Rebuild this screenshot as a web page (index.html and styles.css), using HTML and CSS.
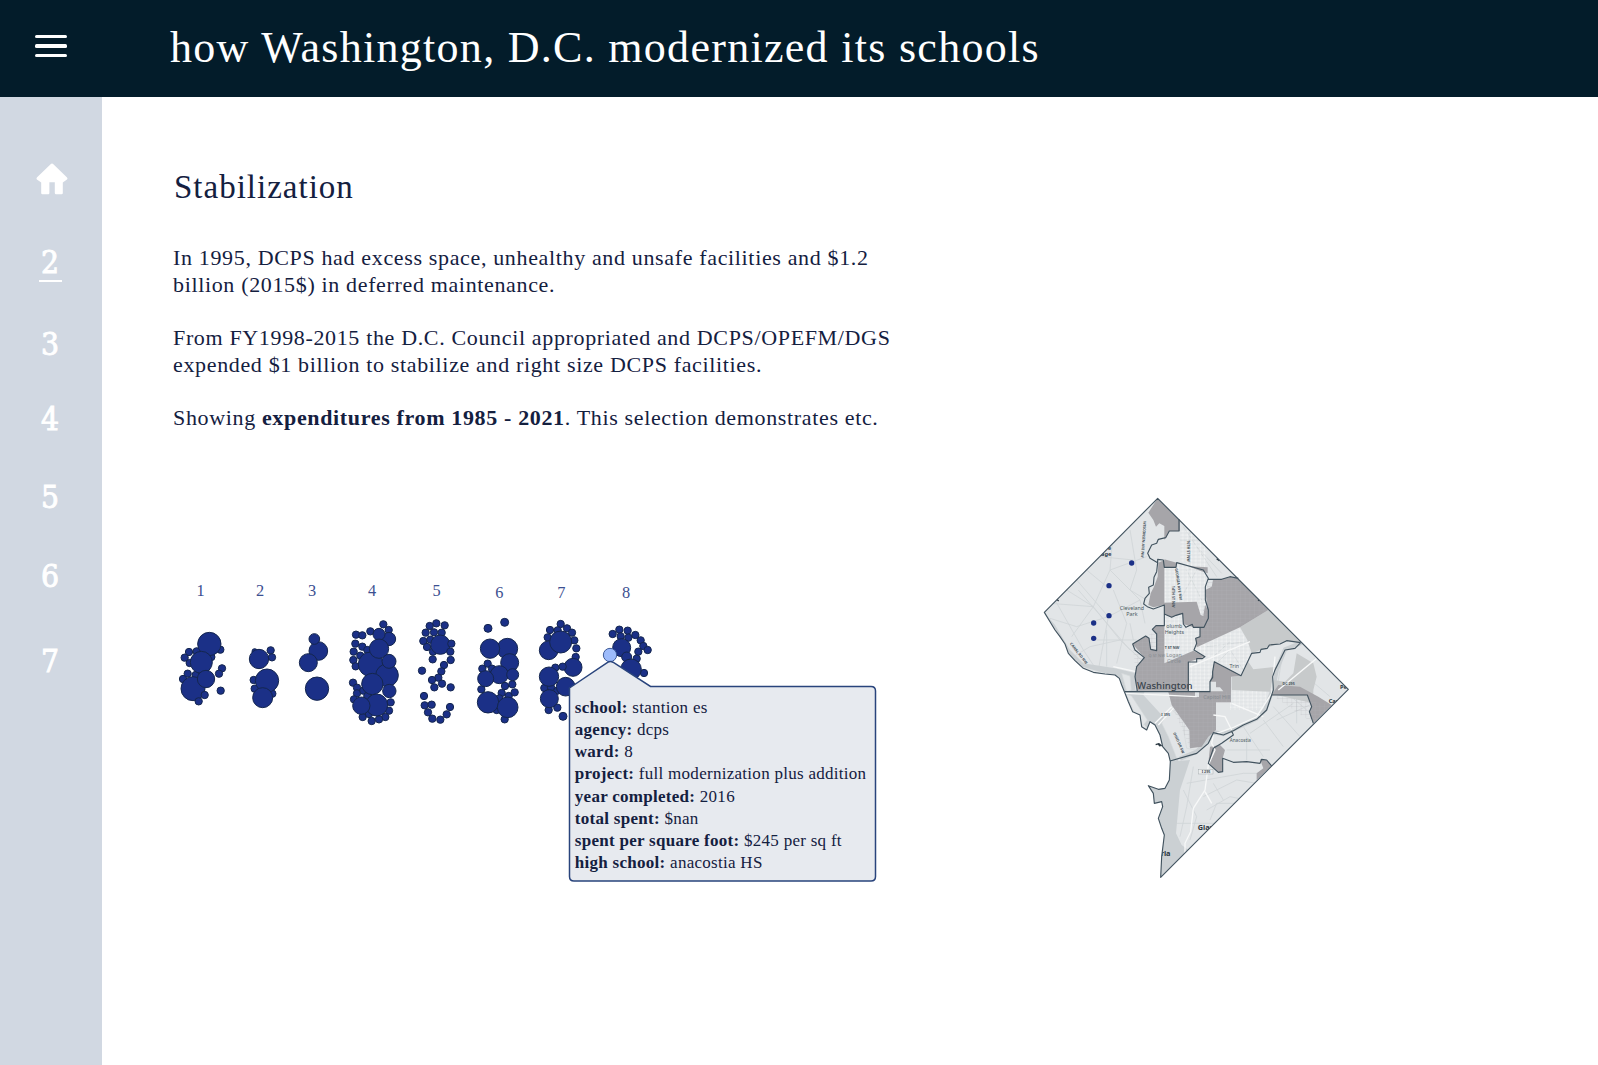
FILE: index.html
```html
<!DOCTYPE html>
<html lang="en">
<head>
<meta charset="utf-8">
<title>how Washington, D.C. modernized its schools</title>
<link rel="stylesheet" href="styles.css">
</head>
<body>
<header class="topbar">
  <button class="menu" aria-label="Menu"><span></span><span></span><span></span></button>
  <h1 class="title">how Washington, D.C. modernized its schools</h1>
</header>
<div class="page">
  <nav class="rail">
    <a class="home" aria-label="Home"><svg width="32" height="32" viewBox="0 0 32 32"><path d="M14.6 1.2Q16 -.2 17.4 1.2L30.8 14.2Q32 15.4 31 16.4L26.8 19.6V30Q26.8 31.2 25.6 31.2H20Q18.8 31.2 18.8 30V19.2H13.4V30Q13.4 31.2 12.2 31.2H6.4Q5.2 31.2 5.2 30V19.6L.9 16.4Q0 15.4 1.1 14.2Z"/></svg></a>
    <a class="step current">2</a>
    <a class="step s3">3</a>
    <a class="step s4">4</a>
    <a class="step s5">5</a>
    <a class="step s6">6</a>
    <a class="step s7">7</a>
  </nav>
  <main class="content">
    <section class="intro">
      <h2>Stabilization</h2>
      <p>In 1995, DCPS had excess space, unhealthy and unsafe facilities and $1.2<br>billion (2015$) in deferred maintenance.</p>
      <p>From FY1998-2015 the D.C. Council appropriated and DCPS/OPEFM/DGS<br>expended $1 billion to stabilize and right size DCPS facilities.</p>
      <p>Showing <b>expenditures from 1985 - 2021</b>. This selection demonstrates etc.</p>
    </section>
    <div class="figures">
      <div class="chart">
        <svg width="490" height="170" viewBox="0 0 1470 510">
          <g class="wards">
            <text x="92" y="79">1</text><text x="270" y="79">2</text><text x="426" y="79">3</text><text x="606" y="79">4</text>
            <text x="800" y="79">5</text><text x="988" y="85">6</text><text x="1174" y="85">7</text><text x="1368" y="85">8</text>
          </g>
          <g id="bubbles" class="bubbles"></g>
        </svg>
        <div class="tooltip">
          <svg class="bubble-shape" width="310" height="224" viewBox="0 0 310 224"><path d="M1.5 30L40 4.2Q42 3 45 4.2L82.5 28.5H303Q307.5 28.5 307.5 33V218.500Q307.5 223 303 223H6Q1.500 223 1.500 218.500Z"/></svg>
          <dl>
            <div><dt>school:</dt> <dd>stantion es</dd></div>
            <div><dt>agency:</dt> <dd>dcps</dd></div>
            <div><dt>ward:</dt> <dd>8</dd></div>
            <div><dt>project:</dt> <dd>full modernization plus addition</dd></div>
            <div><dt>year completed:</dt> <dd>2016</dd></div>
            <div><dt>total spent:</dt> <dd>$nan</dd></div>
            <div><dt>spent per square foot:</dt> <dd>$245 per sq ft</dd></div>
            <div><dt>high school:</dt> <dd>anacostia HS</dd></div>
          </dl>
        </div>
      </div>
      <svg class="map" width="330" height="400" viewBox="0 0 990 1200">
        <defs>
          <path id="outline" d="M383 25L955 598L392 1162L395 1100L403 1035L395 1015L385 985L398 950L395 935L373 940L370 910L355 887L385 898L405 895L418 870L421 815L415 790L398 770L390 735L375 705L360 695L350 720L335 710L330 675L308 665L295 635L285 610L275 585L268 565L255 555L225 552L190 547L160 535L135 512L115 490L105 462L90 440L75 420L60 395L43 367Z"/>
          <clipPath id="city"><use href="#outline"/></clipPath>
          <pattern id="streets" width="14" height="12" patternUnits="userSpaceOnUse"><path d="M0 1H14M1 0V12"/></pattern>
          <pattern id="blocks" width="13" height="11" patternUnits="userSpaceOnUse"><path d="M0 3H13M4 0V11"/></pattern>
        </defs>
        <g clip-path="url(#city)">
          <rect class="land" width="990" height="1200"/>
          <g class="lane">
            <path d="M60 340L190 350L270 450L345 520M110 300L190 350L125 440M190 350L240 240L250 120M240 240L350 200M240 240L330 330L345 400M140 270L235 380L205 540M235 380L330 330M60 385L140 410L235 380M270 450L180 470L130 500M300 120L320 240L300 300L350 330M210 200L310 210M170 240L230 290M250 300L290 400L260 520M300 400L310 450M75 330L160 480L200 540M145 300L300 480M200 450H320M230 420V530"/>
            <path d="M460 110L560 260M480 90V240M450 150H520M500 170L575 250M470 240L515 330M500 240L450 330M530 470L690 450M550 500L600 455M560 520L600 480L640 540M690 540L830 660M760 480L740 600M740 690L850 640M730 650L810 740M660 730L790 640M640 710L700 800M700 690L760 770M800 600L800 700M590 780L720 780M650 740L650 810M830 560L900 620M860 500L790 580M470 880L640 850L700 850M520 920L620 870L680 880M530 960L600 920L650 930M460 900L500 980L480 1050M440 1000H560M540 990L560 940L620 940M550 880L580 930M490 830L470 950L450 1040"/>
          </g>
          <rect class="blocks" x="403" y="225" width="125" height="270"/>
          <rect class="blocks" x="475" y="490" width="80" height="112"/>
          <rect class="blocks" x="450" y="120" width="80" height="110"/>
          <rect class="blocks" x="600" y="590" width="110" height="70"/>
          <path class="blocks" d="M500 470L630 415L665 480L640 545L555 515Z"/>
          <path class="water" d="M43 367L75 405L120 480L160 520L255 535L318 550L316 600L345 602L340 615L400 680L425 730L445 813L480 810L450 900L438 1030L455 1065L475 1080L392 1162L340 1000L340 870L410 800L340 700L280 620L262 560L120 520Z"/>
          <path class="land bank" d="M288 612L305 618L352 690L338 708L312 665ZM420 655L455 685L470 775L500 780L440 805L415 740L395 700Z"/>
          <path class="land bank" d="M275 550L300 558L304 600L290 605Z"/>
          <path class="river" d="M815 458L765 478L740 540L728 600L705 660L680 685L610 718L580 732L550 727L530 758L500 785L450 806"/>
          <path class="mid" d="M715 360L812 458L770 452L665 490L652 450L630 412ZM655 515L670 538L740 530L728 565L720 605L605 600L605 560L633 557ZM800 490L850 520L860 560L850 600V640L725 612L728 570L765 575L790 550ZM415 605H475V640L430 650Z"/>
          <path class="park" d="M383 25L450 91L450 123H418L407 143L403 150V108L388 100L378 110L370 90L355 68ZM403 208L440 218L438 232H403ZM475 229L533 232V250L510 242ZM385 218L403 210V345L370 352L355 345L362 310L372 290L383 260ZM403 338L500 335L512 375L520 378L525 345L535 360V385L522 412L490 412L460 402L458 370L425 382L403 372ZM545 290L550 268L575 268L600 260L625 265L715 360L630 412L500 472L497 445L510 438V412H522L535 385L526 300ZM308 462L347 438L357 445L362 478L380 482V432L367 418L378 407H403V520L490 482L525 500L475 516V602H322L315 560L320 530L343 503ZM553 515L633 557L603 560V590L603 637H558V720L535 740L515 770L480 775L478 720L425 645L415 605H540V575L548 545ZM725 615L745 585L810 590L865 620L905 645L850 700L838 665L845 650L832 615ZM540 770L570 765L585 780L578 805V845L565 847L535 820ZM690 808L710 810L725 828L705 845L680 870V850L700 835Z"/>
          <path class="streets" d="M308 462L403 407V520L525 500L475 516V602H322ZM415 605H603V637H558V720L480 775L425 645ZM535 268L625 265L715 360L500 472ZM725 615L905 645L850 700Z"/>
          <rect class="land" x="495" y="606" width="12" height="15"/><path class="land" d="M510 602H540V575H558V592H570L580 604H510Z"/>
          <path class="road" d="M550 735L545 760L555 780L535 825L525 900L490 955L482 1025L465 1060V1090M525 905L545 940M560 730L610 712L680 680L725 610L735 500M375 700L425 650M385 705L430 655M550 675L585 680L605 720M480 530L660 455M250 530L318 545M605 640L700 680M745 600L860 505L840 480M285 610L500 620"/>
          <g class="label">
            <text x="306" y="360">Cleveland</text><text x="306" y="378">Park</text><text x="433" y="413">olumb</text><text x="433" y="431">Heights</text>
            <text class="faint" x="432" y="502">Logan</text><text class="faint" x="432" y="520">Circle</text><text class="faint" x="380" y="502" font-size="12">Q ST NW</text>
            <text x="613" y="533">Trin</text><text class="faint" x="560" y="626">Capitol Hill</text><text x="631" y="757" font-size="14">Anacostia</text>
            <text x="426" y="476" class="small">T ST NW</text><text x="407" y="678" class="small">I 395</text><text x="776" y="584" class="small">DC 295</text>
            <rect x="505" y="838" width="44" height="14"/><text x="528" y="850" class="small">I 295</text>
            <text class="small" transform="translate(337 148) rotate(94)">WISCONSIN AVE NW</text>
            <text class="small" transform="translate(472 183) rotate(90)">16TH ST NW</text>
            <text class="small" transform="translate(442 283) rotate(82)">GEORGIA AVE NW</text>
            <text class="small" transform="translate(426 320) rotate(90)">14TH ST NW</text>
            <text class="small" transform="translate(143 492) rotate(52)">CANAL RD NW</text>
            <text class="small" transform="translate(443 760) rotate(66)">OHIO DR SW</text>
          </g>
          <g class="place"><text x="321" y="597" class="capital">Washington</text><text x="213" y="198" class="edge">age</text><text x="233" y="179" class="edge">e</text><text x="503" y="1019">Glassmanor</text><text x="392" y="1097">ria</text><text x="930" y="596" class="edge">Pe</text><text x="896" y="638" class="edge">Cap</text></g>
          <path class="tick" d="M80 328L86 333M560 206L568 212M683 320L690 328L684 332"/>
        </g>
        <g class="border">
          <use href="#outline"/>
          <path d="M447 88V123H418L407 143L385 148L380 160L365 165L353 190L360 205L383 218L380 245L372 262L370 285L356 292L358 310L345 325L341 342L352 350L370 357L403 345V407H378L367 418L380 432V482L362 478L357 445L347 438L308 462L315 480L343 503L320 530L315 560L322 604M383 218V208L400 210L403 232H438L440 218L520 240L535 265L526 290V330L535 360V385L522 412H490L487 403L468 412L460 402L458 370L438 376L425 382L403 372M510 412V440L497 445L500 460L492 480L525 500L517 506H500V516H475V604M285 605H540V575L548 562V545L553 515L633 557L665 490L690 487L693 478L712 475L718 465L750 462L770 452L812 458M535 268H575L600 260L625 265M812 458L795 475L765 480L750 510L735 540L728 560L730 600L720 630L710 660L680 688L640 705L610 722L580 735L550 728L535 760L500 790L420 813M605 722L610 735L575 760L550 775L535 820L565 847L578 845V805L610 817L650 815L690 820L695 808L710 810L725 828M725 615H832L845 650L838 665L850 700"/>
          <path class="tick" d="M377 764L387 761L395 768M385 763L391 769"/>
        </g>
        <g class="schools"><circle cx="305" cy="219" r="8"/><circle cx="237" cy="287" r="8"/><circle cx="237" cy="377" r="8"/><circle cx="191" cy="399" r="8"/><circle cx="191" cy="445" r="8"/></g>
      </svg>
    </div>
  </main>
</div>
<script src="script.js"></script>
</body>
</html>
```
FILE: styles.css
```css
* { box-sizing: border-box; }
body { margin: 0; background: #fff; color: #14203f; font-family: "Liberation Serif", "Times New Roman", serif; }
.topbar { display: flex; align-items: flex-start; height: 97px; background: #031c2a; color: #fff; }
.menu { display: flex; flex-direction: column; gap: 6px; width: 170px; padding: 35px 0 0 35px; border: 0; background: none; }
.menu span { width: 32px; height: 3.3px; border-radius: 1.5px; background: #fff; }
.title { margin: 0; padding-top: 21.500px; font-size: 44px; line-height: 51px; font-weight: 400; letter-spacing: 1.29px; white-space: nowrap; }
.page { display: flex; height: 968px; }
.rail { display: flex; flex-direction: column; align-items: center; width: 102px; padding: 66px 2px 0 0; background: #d1d8e2; }
.home { height: 32px; padding-left: 4.500px; }
.home svg { display: block; fill: #fff; }
.step { margin-top: 35px; color: #fff; font: 31.500px/40px "DejaVu Serif Condensed", "DejaVu Serif", serif; height: 40px; -webkit-text-stroke: .9px #fff; }
.current { position: relative; margin-top: 46.500px; }
.current::after { content: ""; position: absolute; left: -1.500px; right: -2.500px; top: 38px; height: 2px; background: #fff; }
.s3 { margin-top: 42px; }
.s5 { margin-top: 38px; }
.s6 { margin-top: 39px; }
.s7 { margin-top: 45px; }
.content { flex: 1; padding: 71px 0 0 68px; }
.intro { height: 322px; padding-left: 3px; white-space: nowrap; letter-spacing: .65px; }
h2 { margin: 0 0 38px 1px; font-size: 33px; line-height: 39px; font-weight: 400; letter-spacing: 1px; }
p { margin: 0 0 26.67px; font-size: 22px; line-height: 26.67px; }
.figures { display: flex; align-items: flex-start; gap: 370px; }
.chart { position: relative; width: 490px; margin-top: 80px; }
.chart > svg, .map { display: block; flex: none; }
.wards { font-size: 49px; fill: #3c5091; text-anchor: middle; }
.bubbles { fill: #1b3087; stroke: #14264f; stroke-width: 3; }
.bubbles .picked { fill: #9dbbfb; stroke: #3d5a97; }
.tooltip { position: absolute; left: 397.600px; top: 88px; width: 310px; height: 224px; }
.bubble-shape { position: absolute; inset: 0; fill: #e7eaef; stroke: #29447c; stroke-width: 1.5; }
dl { position: relative; margin: 0; padding: 38.500px 0 0 7.200px; font-size: 17px; line-height: 22.25px; letter-spacing: .28px; white-space: nowrap; }
dt, dd { display: inline; margin: 0; }
dt { font-weight: 700; }
.land { fill: #e2e5e7; }
.bank { stroke: #d4d9db; stroke-width: 2; }
.water { fill: #cbd0d3; }
.river { fill: none; stroke: #cbd0d3; stroke-width: 13; }
.mid { fill: #c7cacb; }
.park { fill: #a6a5a9; }
.streets { fill: url(#streets); }
#streets path { stroke: #b1b1b5; stroke-width: .7; }
.blocks { fill: url(#blocks); }
#blocks path { stroke: #f4f5f6; stroke-width: 2; stroke-dasharray: 7 2; }
.lane { fill: none; stroke: #d0d5d7; stroke-width: 2.5; }
.road { fill: none; stroke: #f7f8f8; stroke-width: 4; }
.label { font-family: "Noto Sans", sans-serif; font-size: 16px; text-anchor: middle; fill: #4c5a62; }
.label rect { fill: #eceeef; stroke: #8b9499; stroke-width: 1; }
.label .faint { fill: #858a90; }
.label .small { font-size: 11px; font-weight: 700; fill: #46525b; }
.place { font-family: "Noto Sans", sans-serif; font-size: 22px; font-weight: 700; fill: #2a363f; }
.place .edge { font-size: 17px; }
.place .capital { font-size: 29px; font-weight: 500; fill: #39434c; }
.border { fill: none; stroke: #42535f; stroke-width: 3.4; stroke-linejoin: round; }
.tick { fill: none; stroke: #2d3a43; stroke-width: 4; }
.schools { fill: #1b3087; }
```
FILE: script.js
```js
// School projects per ward: [x, y, radius], drawn back to front.
const projects = [
  // ward 1
  [57,246,11],[80,244,11],[44,263,11],[59,279,11],[124,261,11],[151,239,11],[53,311,11],[39,327,11],[77,315,11],[156,295,11],[147,311,11],[152,362,11],[118,222,35],[94,277,33],[69,356,36],[108,327,26],[104,375,11],[86,394,11],
  // ward 2
  [254,244,8],[302,241,11],[306,262,11],[251,330,11],[254,356,11],[307,371,11],[267,267,29],[291,332,35],[278,383,30],
  // ward 3
  [445,243,28],[433,207,16],[415,278,27],[441,356,35],
  // ward 4
  [558,194,11],[577,196,11],[601,184,11],[640,163,11],[656,180,11],[556,221,11],[577,230,11],[551,245,11],[571,257,11],[550,270,11],[557,289,11],[592,240,11],[549,338,11],[561,353,11],[561,370,11],[552,388,11],[580,362,11],[592,378,11],[662,397,11],[657,422,11],[646,441,11],[627,448,11],[605,453,11],[578,441,11],[597,432,11],[602,283,37],[651,316,34],[657,207,20],[627,193,18],[627,236,29],[657,274,21],[658,363,20],[607,342,32],[620,405,33],[574,407,26],
  // ward 5
  [799,160,11],[779,168,11],[824,166,11],[767,188,11],[792,187,11],[815,188,11],[760,213,11],[781,209,11],[771,231,11],[789,245,11],[811,224,29],[844,221,11],[841,245,11],[788,268,11],[842,270,11],[822,285,11],[756,302,11],[814,304,11],[805,323,11],[786,330,11],[816,341,11],[793,352,11],[842,352,11],[762,378,11],[764,406,11],[785,404,11],[840,411,11],[774,427,11],[830,433,11],[787,446,11],[811,449,11],
  // ward 6
  [1004,157,12],[954,175,12],[953,281,11],[937,296,11],[966,296,11],[934,358,11],[1005,348,11],[1027,343,11],[995,369,11],[1016,378,11],[1034,367,11],[980,420,11],[1004,448,11],[988,385,11],[1012,236,31],[960,236,29],[1019,278,27],[988,314,27],[1028,314,18],[947,326,24],[954,397,32],[1013,412,31],
  // ward 7
  [1172,162,11],[1140,180,11],[1163,181,11],[1191,175,11],[1206,188,11],[1133,202,11],[1213,211,11],[1219,235,11],[1217,261,11],[1136,241,28],[1172,216,33],[1209,292,27],[1156,293,11],[1178,290,11],[1123,354,11],[1143,352,11],[1162,362,11],[1137,320,29],[1187,350,28],[1162,413,11],[1136,420,11],[1138,386,27],[1179,439,12],
  // ward 8
  [1328,192,11],[1348,179,11],[1373,182,11],[1352,199,11],[1375,203,11],[1396,195,11],[1412,211,11],[1420,228,11],[1433,240,11],[1405,245,11],[1400,266,11],[1422,309,11],[1355,233,27],[1370,261,15],[1383,298,31]
];
const layer = document.getElementById("bubbles");
function bubble(x, y, r, name) {
  const c = document.createElementNS("http://www.w3.org/2000/svg", "circle");
  c.setAttribute("cx", x);
  c.setAttribute("cy", y);
  c.setAttribute("r", r);
  if (name) c.setAttribute("class", name);
  layer.appendChild(c);
}
projects.forEach(([x, y, r]) => bubble(x, y, r));
bubble(1320, 255, 20, "picked");
```
